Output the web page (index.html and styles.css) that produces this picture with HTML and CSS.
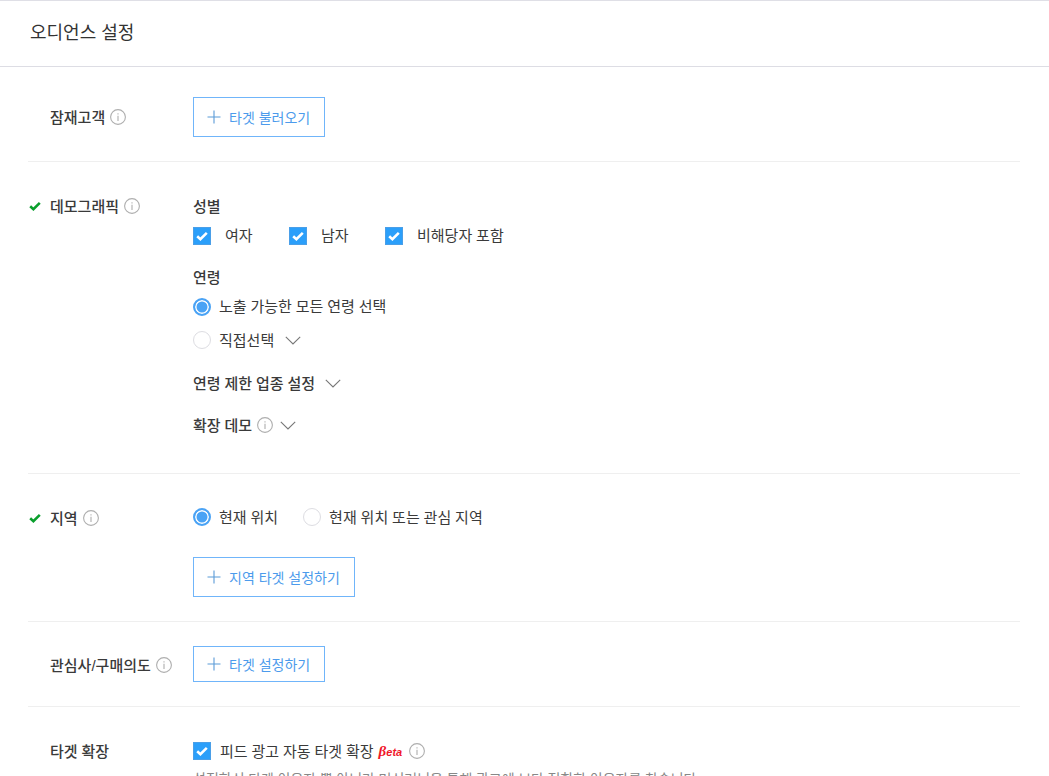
FILE: index.html
```html
<!DOCTYPE html>
<html lang="ko">
<head>
<meta charset="utf-8">
<title>오디언스 설정</title>
<link rel="stylesheet" href="styles.css">
</head>
<body>
<svg class="defs" width="0" height="0" aria-hidden="true">
  <symbol id="info" viewBox="0 0 16 16"><circle cx="8" cy="8" r="7.4" fill="none" stroke="#aeaeae" stroke-width="1.1"/><path d="M8 4.2v1.2M8 6.8v5.2" stroke="#aeaeae" stroke-width="1.1" fill="none"/></symbol>
  <symbol id="chev" viewBox="0 0 16 9"><path d="M.8.8 8 8l7.2-7.2" fill="none" stroke="#777" stroke-width="1.1"/></symbol>
  <symbol id="plus" viewBox="0 0 14 14"><path d="M7 .5v13M.5 7h13" stroke="#5b9bd8" stroke-width="1.1" fill="none"/></symbol>
  <symbol id="tick" viewBox="0 0 12 10"><path d="M1.2 5.2 4.4 8.2 10.8 1.8" fill="none" stroke="currentColor" stroke-width="2.6"/></symbol>
</svg>
<main class="panel">
  <header class="head"><h1>오디언스 설정</h1></header>

  <section class="row row-audience">
    <div class="label"><span>잠재고객</span><svg class="info"><use href="#info"/></svg></div>
    <div class="body"><button class="add"><svg class="plus"><use href="#plus"/></svg>타겟 불러오기</button></div>
  </section>

  <section class="row row-demo">
    <div class="label"><svg class="ok"><use href="#tick"/></svg><span>데모그래픽</span><svg class="info"><use href="#info"/></svg></div>
    <div class="body">
      <h2 class="sub">성별</h2>
      <div class="checks">
        <label class="opt opt-w"><i class="box"><svg class="boxtick"><use href="#tick"/></svg></i><span class="nudge">여자</span></label>
        <label class="opt opt-w"><i class="box"><svg class="boxtick"><use href="#tick"/></svg></i><span class="nudge">남자</span></label>
        <label class="opt"><i class="box"><svg class="boxtick"><use href="#tick"/></svg></i><span class="nudge">비해당자 포함</span></label>
      </div>
      <h2 class="sub sub-age"><span class="nudge">연령</span></h2>
      <div class="radio-line"><i class="radio on"></i><span class="nudge">노출 가능한 모든 연령 선택</span></div>
      <div class="radio-line line-direct"><i class="radio"></i>직접선택<svg class="chev"><use href="#chev"/></svg></div>
      <h2 class="sub sub-limit">연령 제한 업종 설정<svg class="chev"><use href="#chev"/></svg></h2>
      <h2 class="sub sub-ext">확장 데모<svg class="info"><use href="#info"/></svg><svg class="chev chev-tight"><use href="#chev"/></svg></h2>
    </div>
  </section>

  <section class="row row-region">
    <div class="label label-region"><svg class="ok"><use href="#tick"/></svg><span>지역</span><svg class="info"><use href="#info"/></svg></div>
    <div class="body">
      <div class="radios">
        <div class="radio-line"><i class="radio on"></i>현재 위치</div>
        <div class="radio-line"><i class="radio"></i>현재 위치 또는 관심 지역</div>
      </div>
      <button class="add add-region"><svg class="plus"><use href="#plus"/></svg>지역 타겟 설정하기</button>
    </div>
  </section>

  <section class="row row-interest">
    <div class="label"><span>관심사<span class="slash">/</span>구매의도</span><svg class="info"><use href="#info"/></svg></div>
    <div class="body"><button class="add add-short"><svg class="plus"><use href="#plus"/></svg>타겟 설정하기</button></div>
  </section>

  <section class="row row-expand">
    <div class="label"><span>타겟 확장</span></div>
    <div class="body">
      <div class="expand-line"><i class="box"><svg class="boxtick"><use href="#tick"/></svg></i><span>피드 광고 자동 타겟 확장</span><em class="beta"><span class="beta-b">β</span>eta</em><svg class="info"><use href="#info"/></svg></div>
      <p class="note">설정하신 타겟 이용자 뿐 아니라 머신러닝을 통해 광고에 보다 적합한 이용자를 찾습니다.</p>
    </div>
  </section>
</main>
</body>
</html>
```
FILE: styles.css
```css
* { box-sizing: border-box; }
html, body { margin: 0; height: 776px; overflow: hidden; background: #fff; }
body { font-family: "Noto Sans CJK KR", "Noto Sans", sans-serif; font-size: 15px; color: #3a3a3a; line-height: 20px; word-spacing: -0.3px; }
.defs { position: absolute; }
.panel { border-top: 1px solid #dfdfe6; }
.head { height: 66px; border-bottom: 1px solid #dddde4; padding: 18px 30px 0; }
.head h1 { margin: 0; font-size: 18px; line-height: 24px; font-weight: 400; color: #333; word-spacing: 0; }
.row { display: flex; margin: 0 29px 0 28px; border-bottom: 1px solid #efefef; }
.label { width: 165px; flex: none; display: flex; align-items: center; align-self: flex-start; padding-left: 22px; position: relative; height: 20px; font-weight: 500; }
.label-region { margin-top: 1px; }
.slash { font-family: "Liberation Sans", sans-serif; }
.ok { position: absolute; left: 1px; top: 5px; width: 12px; height: 10px; color: #0a9f2d; }
.info { width: 16px; height: 16px; margin-left: 5px; flex: none; }
.body { flex: 1; min-width: 0; }
.add { display: flex; align-items: center; width: 132px; height: 40px; border: 1px solid #70b5fa; background: #fff; padding: 0 0 0 13px; font: inherit; font-size: 14px; color: #4c9bec; white-space: nowrap; }
.plus { width: 14px; height: 14px; margin-right: 8px; flex: none; }
.add-region { width: 162px; margin-top: 30px; }
.add-short { height: 36px; }
.row-audience { height: 95px; padding-top: 30px; }
.row-audience .label { margin-top: 10px; }
.row-demo { height: 312px; padding-top: 34px; }
.sub { margin: 0; font-size: 15px; font-weight: 500; line-height: 20px; height: 20px; display: flex; align-items: center; color: #3a3a3a; }
.checks { display: flex; margin-top: 10px; height: 20px; }
.opt { display: flex; align-items: center; }
.opt-w { width: 96px; }
.nudge { margin-bottom: 2px; }
.box { width: 18px; height: 18px; background: #2b9ffa; border: 1px solid #4a9fe8; display: flex; align-items: center; justify-content: center; margin-right: 14px; flex: none; }
.boxtick { width: 12px; height: 10px; color: #fff; }
.sub-age { margin-top: 22px; }
.radio-line { display: flex; align-items: center; height: 20px; }
.sub-age + .radio-line { margin-top: 9px; }
.line-direct { margin-top: 13px; }
.radio { width: 18px; height: 18px; border-radius: 50%; border: 1px solid #dddde2; margin-right: 8px; flex: none; background: #fff; }
.radio.on { border: 2px solid #4aa3f5; background: #4aa3f5; box-shadow: inset 0 0 0 1.5px #fff; }
.chev { width: 16px; height: 9px; margin-left: 11px; flex: none; }
.chev-tight { margin-left: 7px; }
.sub-limit { margin-top: 23px; }
.sub-limit .chev { margin-left: 10px; }
.sub-ext { margin-top: 22px; }
.row-region { height: 148px; padding-top: 33px; }
.radios { display: flex; gap: 25px; }
.row-interest { height: 85px; padding-top: 24px; }
.row-interest .label { margin-top: 9px; }
.row-expand { border-bottom: 0; padding-top: 34px; }
.expand-line { display: flex; align-items: center; height: 20px; }
.expand-line .box { margin-right: 9px; }
.expand-line .info { margin-left: 7px; }
.beta { color: #f0172a; font-family: "Liberation Sans", sans-serif; font-size: 11px; font-weight: 700; font-style: italic; margin-left: 5px; word-spacing: 0; }
.beta-b { font-family: "Liberation Serif", serif; font-size: 15px; }
.note { margin: 7px 0 0; font-size: 14px; color: #888; white-space: nowrap; }
```
